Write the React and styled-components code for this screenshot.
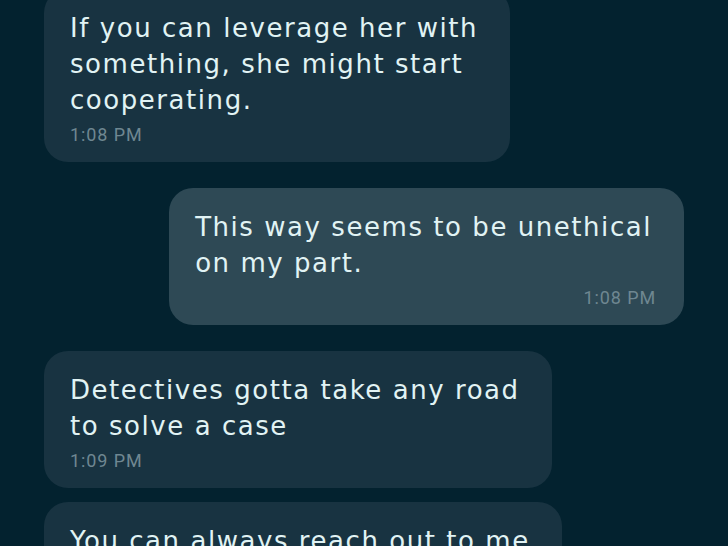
import React from "react";
import styled, { createGlobalStyle } from "styled-components";

const GlobalStyle = createGlobalStyle`
  html, body {
    margin: 0;
    padding: 0;
    background: #03222f;
  }
  * { box-sizing: border-box; }
`;

const Screen = styled.div`
  width: 728px;
  height: 546px;
  overflow: hidden;
  background: #03222f;
`;

const Thread = styled.div`
  display: flex;
  flex-direction: column;
  padding: 0 44px;
  margin-top: -11px;
`;

const Bubble = styled.div`
  align-self: ${(p) => (p.$mine ? "flex-end" : "flex-start")};
  display: flex;
  flex-direction: column;
  width: fit-content;
  padding: 21px 32px 16px 26px;
  margin-top: ${(p) => p.$gap}px;
  border-radius: 24px;
  background: ${(p) => (p.$mine ? "#2e4955" : "#183341")};
`;

const Text = styled.div`
  font-family: "DejaVu Sans", "Noto Sans", sans-serif;
  font-size: 26px;
  line-height: 36px;
  letter-spacing: 1.55px;
  color: #e1f3f4;
  white-space: pre-line;
`;

const Time = styled.div`
  align-self: ${(p) => (p.$mine ? "flex-end" : "flex-start")};
  margin-top: 6px;
  margin-right: ${(p) => (p.$mine ? "-4px" : "0")};
  font-family: "Roboto", "Liberation Sans", sans-serif;
  font-size: 18px;
  line-height: 22px;
  letter-spacing: 0.9px;
  color: #6f8791;
`;

const messages = [
  {
    text: "If you can leverage her with\nsomething, she might start\ncooperating.",
    time: "1:08 PM",
    mine: false,
    gap: 0,
  },
  {
    text: "This way seems to be unethical\non my part.",
    time: "1:08 PM",
    mine: true,
    gap: 26,
  },
  {
    text: "Detectives gotta take any road\nto solve a case",
    time: "1:09 PM",
    mine: false,
    gap: 26,
  },
  {
    text: "You can always reach out to me\nif you need any help.",
    time: "1:09 PM",
    mine: false,
    gap: 14,
  },
];

const App = () => {
  return (
    <Screen>
      <GlobalStyle />
      <Thread>
        {messages.map((m, i) => (
          <Bubble key={i} $mine={m.mine} $gap={m.gap}>
            <Text>{m.text}</Text>
            <Time $mine={m.mine}>{m.time}</Time>
          </Bubble>
        ))}
      </Thread>
    </Screen>
  );
};

export default App;
